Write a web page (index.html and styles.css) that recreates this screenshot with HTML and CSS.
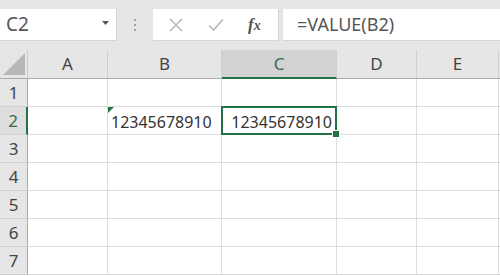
FILE: index.html
```html
<!DOCTYPE html>
<html>
<head>
<meta charset="utf-8">
<link rel="stylesheet" href="styles.css">
</head>
<body>
<div class="app">
  <div class="toolbar">
    <div class="namebox">
      <span class="name">C2</span>
      <svg class="dd" width="7" height="4" viewBox="0 0 7 4"><path d="M0 0H7L3.5 4Z" fill="#555"/></svg>
    </div>
    <div class="grip"><i></i><i></i><i></i></div>
    <div class="btns">
      <svg class="btn" width="14" height="14" viewBox="0 0 14 14"><path d="M1 1L13 13M13 1L1 13" stroke="#b0b0b0" stroke-width="1.4" fill="none"/></svg>
      <svg class="btn" width="16" height="14" viewBox="0 0 16 14"><path d="M1 7.5L5.5 12L15 1.5" stroke="#b0b0b0" stroke-width="1.4" fill="none"/></svg>
      <span class="fx">f<span class="x">x</span></span>
    </div>
    <div class="formula">=VALUE(B2)</div>
  </div>
  <div class="sheet">
    <div class="corner"><svg width="22" height="22" viewBox="0 0 22 22"><path d="M22 0V22H0Z" fill="#b8b8b8"/></svg></div>
    <div class="ch">A</div>
    <div class="ch">B</div>
    <div class="ch sel">C</div>
    <div class="ch">D</div>
    <div class="ch">E</div>
    <div class="ch end"></div>

    <div class="rh">1</div>
    <div class="c"></div><div class="c"></div><div class="c"></div><div class="c"></div><div class="c"></div><div class="c end"></div>

    <div class="rh rsel">2</div>
    <div class="c"></div>
    <div class="c txt"><span class="tri"></span>12345678910</div>
    <div class="c num active">12345678910</div>
    <div class="c"></div><div class="c"></div><div class="c end"></div>

    <div class="rh">3</div>
    <div class="c"></div><div class="c"></div><div class="c"></div><div class="c"></div><div class="c"></div><div class="c end"></div>
    <div class="rh">4</div>
    <div class="c"></div><div class="c"></div><div class="c"></div><div class="c"></div><div class="c"></div><div class="c end"></div>
    <div class="rh">5</div>
    <div class="c"></div><div class="c"></div><div class="c"></div><div class="c"></div><div class="c"></div><div class="c end"></div>
    <div class="rh">6</div>
    <div class="c"></div><div class="c"></div><div class="c"></div><div class="c"></div><div class="c"></div><div class="c end"></div>
    <div class="rh">7</div>
    <div class="c"></div><div class="c"></div><div class="c"></div><div class="c"></div><div class="c"></div><div class="c end"></div>
  </div>
</div>
</body>
</html>
```
FILE: styles.css
```css
html, body {
  margin: 0;
  padding: 0;
  background: #ffffff;
}
.app {
  width: 500px;
  height: 276px;
  overflow: hidden;
  font-family: "Noto Sans", "Noto Sans CJK JP", sans-serif;
}
.toolbar {
  height: 50px;
  box-sizing: border-box;
  padding-top: 9px;
  background: #e6e6e6;
  display: flex;
  align-items: flex-start;
}
.namebox {
  width: 117px;
  height: 32px;
  background: #fff;
  border-right: 1px solid #d6d6d6;
  border-bottom: 1px solid #d6d6d6;
  box-sizing: border-box;
  display: flex;
  align-items: center;
  justify-content: space-between;
  padding: 0 7px 1px 6px;
}
.name {
  font-size: 19px;
  color: #555;
  line-height: 1;
}
.dd { margin-bottom: 2px; }
.grip {
  width: 36px;
  height: 32px;
  display: flex;
  flex-direction: column;
  align-items: center;
  justify-content: center;
  gap: 3px;
}
.grip i {
  display: block;
  width: 2px;
  height: 2px;
  background: #a0a0a0;
}
.btns {
  width: 126px;
  height: 32px;
  background: #fff;
  border-right: 1px solid #d6d6d6;
  border-bottom: 1px solid #d6d6d6;
  box-sizing: border-box;
  display: flex;
  align-items: center;
  padding-left: 16px;
}
.btns .btn:first-child { margin-right: 25px; }
.btns .btn:nth-child(2) { margin-right: 24px; }
.fx {
  font-family: "Liberation Serif", serif;
  font-style: italic;
  font-size: 17px;
  color: #555;
  font-weight: bold;
}
.fx .x { font-size: 14px; }
.formula {
  margin-left: 4px;
  flex: 1;
  height: 32px;
  background: #fff;
  border-bottom: 1px solid #d6d6d6;
  box-sizing: border-box;
  font-size: 18px;
  color: #555;
  padding: 2px 0 0 14px;
  line-height: 26px;
}
.sheet {
  display: grid;
  grid-template-columns: 28px 80px 114px 115px 80px 82px 1fr;
  grid-template-rows: 29px repeat(7, 28px);
}
.sheet > div {
  box-sizing: border-box;
}
.corner {
  background: #e6e6e6;
  border-right: 1px solid #c8c8c8;
  border-bottom: 1px solid #ababab;
  display: flex;
  align-items: flex-end;
  justify-content: flex-end;
  padding: 0 2px 3px 0;
}
.ch {
  background: #e6e6e6;
  border-right: 1px solid #cfcfcf;
  border-bottom: 1px solid #ababab;
  text-align: center;
  font-size: 17px;
  line-height: 28px;
  color: #444;
}
.ch.sel {
  background: #d2d2d2;
  border-bottom: 2px solid #217346;
  color: #366b4c;
}
.ch.end { border-right: none; }
.rh {
  background: #e6e6e6;
  border-right: 1px solid #ababab;
  border-bottom: 1px solid #d0d0d0;
  text-align: center;
  font-size: 17px;
  line-height: 27px;
  color: #444;
}
.rh.rsel {
  background: #dedede;
  border-right: 2px solid #217346;
  color: #366b4c;
}
.c {
  border-right: 1px solid #dcdcdc;
  border-bottom: 1px solid #dcdcdc;
  font-size: 16px;
  color: #333;
  line-height: 30px;
  white-space: nowrap;
}
.c.end { border-right: none; }
.txt {
  position: relative;
  padding-left: 3px;
}
.tri {
  position: absolute;
  left: 0;
  top: 0;
  width: 0;
  height: 0;
  border-top: 6px solid #217346;
  border-right: 6px solid transparent;
}
.num {
  text-align: right;
  padding-right: 4px;
}
.active {
  position: relative;
}
.active::before {
  content: "";
  position: absolute;
  left: -1px;
  top: -1px;
  right: -1px;
  bottom: -1px;
  border: 2px solid #217346;
}
.active::after {
  content: "";
  position: absolute;
  right: -4px;
  bottom: -4px;
  width: 6px;
  height: 6px;
  background: #217346;
  border: 1px solid #fff;
}
```
